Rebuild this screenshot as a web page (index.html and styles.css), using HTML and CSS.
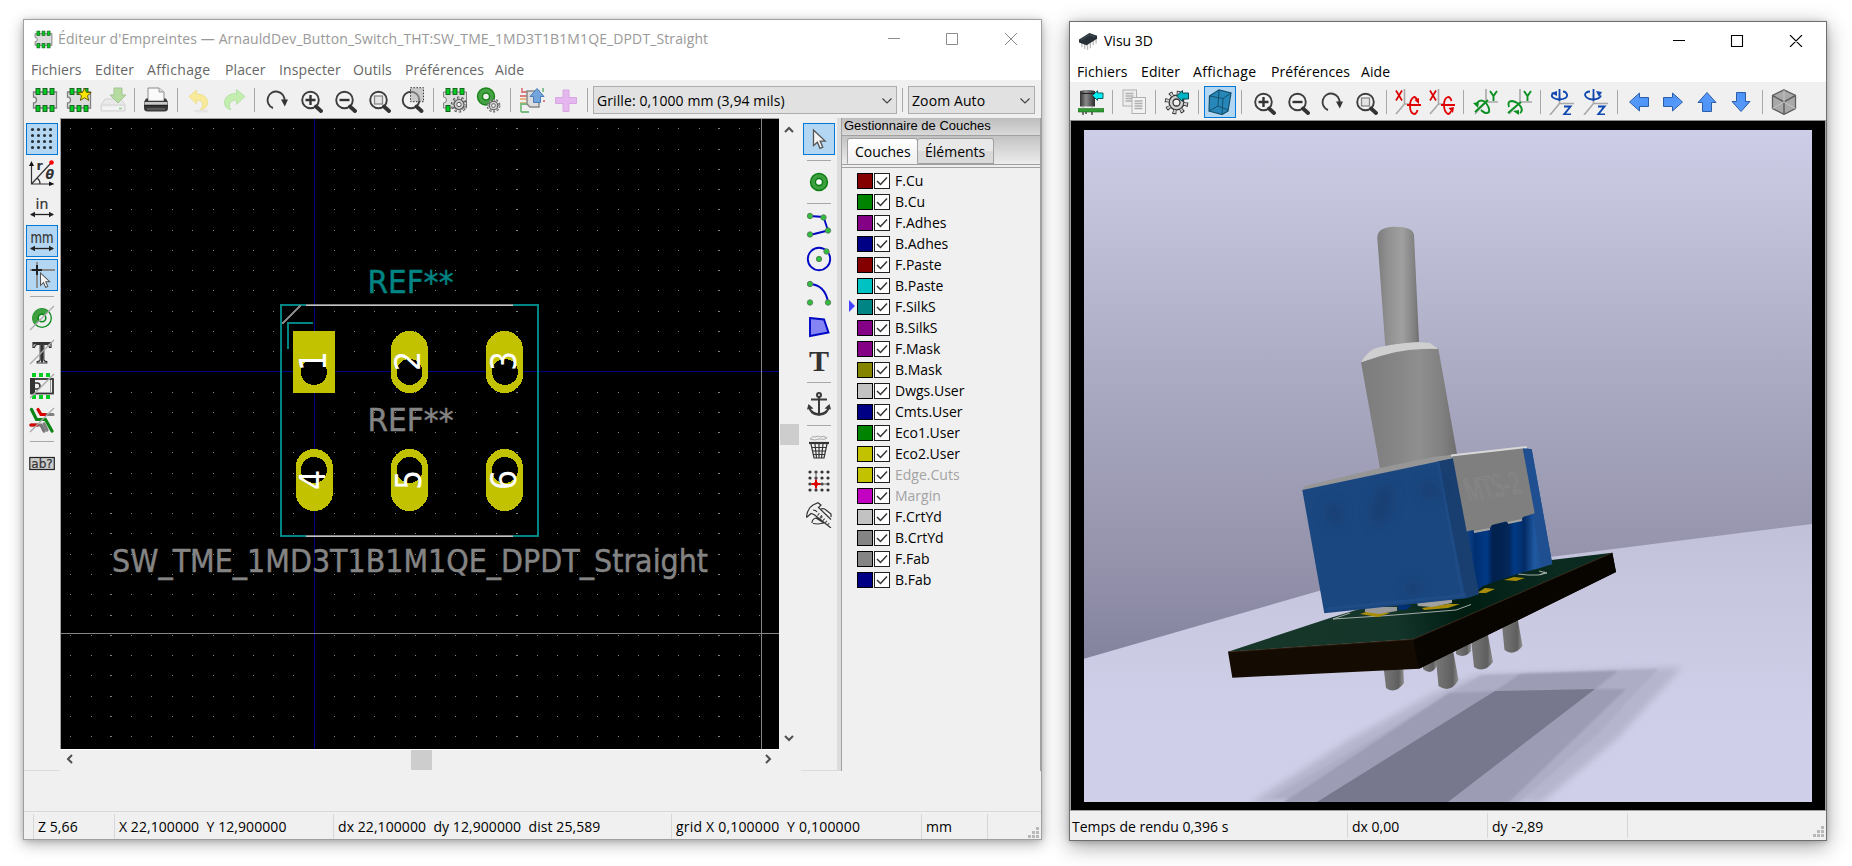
FILE: index.html
```html
<!DOCTYPE html>
<html lang="fr">
<head>
<meta charset="utf-8">
<title>Éditeur d'Empreintes</title>
<link rel="stylesheet" href="styles.css">
</head>
<body>
<svg class="sprite" aria-hidden="true">
  <defs>
    <linearGradient id="gBlueArrow" x1="0" y1="0" x2="1" y2="1"><stop offset="0" stop-color="#5b9dfb"/><stop offset="1" stop-color="#4a90f6"/></linearGradient>
    <linearGradient id="gCap" x1="0" x2="1"><stop offset="0" stop-color="#333"/><stop offset=".4" stop-color="#8a8a8a"/><stop offset="1" stop-color="#2c2c2c"/></linearGradient>
    <g id="padsTop" fill="#0c2" stroke="#175c1c" stroke-width=".9"><rect x="4" y="1.500" width="4" height="6"/><rect x="11" y="1.500" width="4" height="6"/><rect x="18" y="1.500" width="4" height="6"/></g>
    <g id="padsBot" fill="#0c2" stroke="#175c1c" stroke-width=".9"><rect x="4" y="18.500" width="4" height="6"/><rect x="11" y="18.500" width="4" height="6"/><rect x="18" y="18.500" width="4" height="6"/></g>
    <g id="glass"><circle cx="13.500" cy="13" r="8.300" fill="#f5f5f5" fill-opacity=".6" stroke="#3d3d3d" stroke-width="1.900"/><path d="M19 19.500l5 4.500" stroke="#333" stroke-width="3.800" stroke-linecap="round"/></g>
    <symbol id="fp" viewBox="0 0 26 26"><path d="M1.500 5H24.500V21H1.500V16A3 3 0 0 0 1.500 10Z" fill="#dcdcdc" stroke="#808080" stroke-width="1.300"/><use href="#padsTop"/><use href="#padsBot"/></symbol>
    <symbol id="fpstar" viewBox="0 0 26 26"><use href="#fp" width="26" height="26"/><path d="M18.500 1l1.900 4.300 4.800.4-3.700 3 1.200 4.700-4.200-2.600-4.200 2.600 1.200-4.700-3.700-3 4.800-.4Z" fill="#fbe400" stroke="#5a5200" stroke-width=".9"/></symbol>
    <symbol id="save" viewBox="0 0 26 26"><g opacity=".5"><path d="M5 12H21L25 18V24H1V18Z" fill="#e4e4e4" stroke="#b4b4b4"/><path d="M1 18H25" stroke="#bbb"/><rect x="2.500" y="19.500" width="21" height="3.500" fill="#f6f6f6"/><path d="M19 21.500h3" stroke="#3a3" stroke-width="1.500"/><path d="M14 1h8v7h4l-8 8-8-8h4Z" fill="#7ec850" stroke="#5a9a3a"/></g></symbol>
    <symbol id="print" viewBox="0 0 26 26"><path d="M5 1H16L21 5V14H5Z" fill="#fafafa" stroke="#8a8a8a"/><path d="M16 1v4h5" fill="#ddd" stroke="#999"/><path d="M3 11.500H5V14H21V11.500H23L25 15V21Q25 24.500 21.500 24.500H4.500Q1 24.500 1 21V15Z" fill="#3a3a3a"/><path d="M1.500 15h23v3h-23z" fill="#c9c9c9"/><path d="M1.500 18.500h23" stroke="#222" stroke-width="1.500"/><path d="M4 22h18" stroke="#777"/></symbol>
    <symbol id="undo" viewBox="0 0 26 26"><ellipse cx="15" cy="24" rx="8" ry="1.600" fill="#e4e4e4"/><path d="M3 9.500L10.500 3V7C18 7 22 11 21.500 16.500 21 20 18 22.500 14.500 22.500 18 19 17.500 13 10.500 13V17Z" fill="#f8ea98" stroke="#eadb86" stroke-width=".8"/></symbol>
    <symbol id="redo" viewBox="0 0 26 26"><path d="M25 9.500L16.500 2.500V6.500C8 6.500 4 11 4.500 16.500 5 20 8 22.500 11 22.500 8 19 9 13 16.500 13V17.500Z" fill="#c3eeb0" stroke="#aedd9c" stroke-width=".8"/></symbol>
    <symbol id="refresh" viewBox="0 0 26 26"><path d="M10 21A8.500 8.500 0 1 1 21.500 14" fill="none" stroke="#3d3d3d" stroke-width="1.900"/><path d="M18 12.500l7 0-3.200 7Z" fill="#333"/></symbol>
    <symbol id="zin" viewBox="0 0 26 26"><use href="#glass"/><path d="M8.500 13h10M13.500 8v10" stroke="#333" stroke-width="2.400"/></symbol>
    <symbol id="zout" viewBox="0 0 26 26"><use href="#glass"/><path d="M8.500 13h10" stroke="#333" stroke-width="2.400"/></symbol>
    <symbol id="zfit" viewBox="0 0 26 26"><use href="#glass"/><rect x="9.500" y="9" width="8" height="8" fill="#e4e4e4" stroke="#888" stroke-width="1.300"/></symbol>
    <symbol id="zsel" viewBox="0 0 26 26"><use href="#glass" x="-1.500"/><rect x="11.500" y=".7" width="13" height="14" fill="#aaa" fill-opacity=".55" stroke="#333" stroke-dasharray="1.500 1.500"/></symbol>
    <g id="gear"><circle r="6.600" fill="none" stroke="#555" stroke-width="3" stroke-dasharray="2.200 1.950"/><circle r="5" fill="#cfcfcf" stroke="#555" stroke-width="1.200"/><circle r="6.300" fill="none" stroke="#ccc" stroke-width="1.800" stroke-dasharray="1.300 2.660" stroke-dashoffset="-.4"/><circle r="2.200" fill="#f2f2f2" stroke="#555"/></g>
    <symbol id="fpgear" viewBox="0 0 26 26"><path d="M1.500 5H24.500V21H1.500V16A3 3 0 0 0 1.500 10Z" fill="#dcdcdc" stroke="#808080"/><use href="#padsTop"/><rect x="4" y="18.500" width="4" height="6" fill="#0c2" stroke="#175c1c"/><use href="#gear" x="17" y="17.500"/></symbol>
    <symbol id="padgear" viewBox="0 0 26 26"><circle cx="10" cy="9.500" r="6" fill="none" stroke="#1a841a" stroke-width="6.400"/><circle cx="10" cy="9.500" r="6" fill="none" stroke="#45a345" stroke-width="3.500"/><g transform="translate(17.500 18.500) scale(.85)"><use href="#gear"/></g></symbol>
    <symbol id="load" viewBox="0 0 26 26"><g opacity=".6" fill="none" stroke-width="1.800"><path d="M3 1v4h5M1 9h7M24 14h2" stroke="#c33"/><path d="M1 12h6M1 16h6" stroke="#e89040"/><path d="M24 1v4M2 25v-8h7M2 25h8" stroke="#2a9a3a"/></g><path d="M8 4H20V20H11L8 17Z" fill="#ddd" stroke="#888" stroke-width="1.500"/><path d="M18 1.500l7 8h-3.500v6h-7v-6h-3.500Z" fill="#72a5dc" stroke="#4c7cb8"/></symbol>
    <symbol id="plus" viewBox="0 0 26 26"><path d="M10 3h6v7.500h7.500v6H16v8h-6v-8H2.500v-6H10Z" fill="#e4b8ee" stroke="#d8a6e4"/></symbol>
    <symbol id="grid" viewBox="0 0 26 26"><path d="M3.500 3.500h22M3.500 9.500h22M3.500 15.500h22M3.500 21.500h22" stroke="#2c3338" stroke-width="3.200" stroke-linecap="round" stroke-dasharray="0 6"/></symbol>
    <symbol id="polar" viewBox="0 0 26 26"><path d="M2.500 24.500V3M2 24H23M2.500 24L22 3M8 18a7 7 0 0 1 3 6" fill="none" stroke="#333" stroke-width="1.200"/><path d="M0 6l2.500-5L5 6ZM20 21.500l5.500 2.500-5.500 2Z" fill="#111"/><circle cx="22.500" cy="2.500" r="2.300" fill="#f00"/><text x="7.500" y="10" class="ic-bold" font-size="12.500">r</text><text x="16.500" y="19" class="ic-bold" font-size="12.500" font-style="italic">θ</text></symbol>
    <g id="dblarrow"><path d="M2 20.500H24" stroke="#222" stroke-width="1.300"/><path d="M1 20.500l5-2.700v5.400ZM25 20.500l-5-2.700v5.400Z" fill="#222"/></g>
    <symbol id="inch" viewBox="0 0 26 26"><text x="13" y="15" text-anchor="middle" class="ic-sans" font-size="14">in</text><use href="#dblarrow"/></symbol>
    <symbol id="mm" viewBox="0 0 26 26"><text x="13" y="15" text-anchor="middle" class="ic-sans" font-size="15" textLength="23" lengthAdjust="spacingAndGlyphs">mm</text><use href="#dblarrow"/></symbol>
    <path id="ptr" d="M0 0V14.500L3.600 11.300 6 17 8.600 15.900 6.200 10.300H10.800Z" fill="#f4f4f4" stroke="#555" stroke-width="1.200"/>
    <symbol id="snap" viewBox="0 0 26 26"><path d="M8 0v26M1 8h25" stroke="#888" stroke-width="1.800"/><path d="M8 3v10M3 8h10" stroke="#222" stroke-width="2"/><use href="#ptr" transform="translate(11.500 11) scale(.85)"/></symbol>
    <symbol id="cursor" viewBox="0 0 26 26"><use href="#ptr" transform="translate(7.500 4) scale(1.080)"/></symbol>
    <symbol id="padoff" viewBox="0 0 26 26"><circle cx="13" cy="13" r="9.300" fill="#efefef" stroke="#0a8a1a" stroke-width="1.300"/><path d="M6.200 19.800A9.300 9.300 0 0 1 19.600 6.400Z" fill="#3d9f40"/><circle cx="13" cy="13" r="3.800" fill="#efefef" stroke="#0a8a1a" stroke-width="1.600"/><path d="M1 25L25 1" stroke="#aaa" stroke-width="1.300"/></symbol>
    <symbol id="txtoff" viewBox="0 0 26 26"><path d="M4 3.500h18v5h-1.500q-.5-3-3-3h-2.700v15q0 2 3 2.200v1.300H8.200v-1.300q3-.2 3-2.200v-15H8.500q-2.500 0-3 3H4Z" fill="#f4f4f4" stroke="#333" stroke-width="1.200"/><path d="M4 3.500h18v2H14v18h-2V5.500H4Z" fill="#333"/><path d="M1 25L25 1" stroke="#aaa" stroke-width="1.300"/></symbol>
    <symbol id="modoff" viewBox="0 0 26 26"><path d="M3 2h20M3 24h20" stroke="#0c2" stroke-width="4" stroke-dasharray="4 3"/><rect x="2" y="6" width="22" height="14.500" fill="#efefef" stroke="#333" stroke-width="1.800"/><path d="M1 5h5v16H1z" fill="#333"/><path d="M5 10h3a2.500 2.500 0 0 1 0 6H5" fill="none" stroke="#333" stroke-width="1.600"/><path d="M21.500 7v12.500" stroke="#999"/><path d="M1 25L25 1" stroke="#aaa" stroke-width="1.300"/></symbol>
    <symbol id="trkoff" viewBox="0 0 26 26"><g fill="none" stroke-width="3.200" stroke-linecap="round"><path d="M2 18h10l3 6" stroke="#777"/><path d="M14 7.500h10M15 17l3 6" stroke="#808080"/><path d="M2.500 2.500l5 10h9L23 24" stroke="#0c8418"/><path d="M9 2.500l3 5h4M2 18h6" stroke="#d80000"/></g><path d="M1 25L25 1" stroke="#aaa" stroke-width="1.300"/></symbol>
    <symbol id="abq" viewBox="0 0 26 26"><rect x=".8" y="7.500" width="24.500" height="12" fill="#ccc" stroke="#222" stroke-width="1.200"/><text x="13" y="17.800" text-anchor="middle" class="ic-sans" font-size="12" textLength="21.500" lengthAdjust="spacingAndGlyphs">ab?</text></symbol>
    <symbol id="pad" viewBox="0 0 26 26"><circle cx="13" cy="13" r="6" fill="#fff" stroke="#0a7d10" stroke-width="6.400"/><circle cx="13" cy="13" r="6" fill="none" stroke="#3d9f40" stroke-width="3.600"/></symbol>
    <g id="dot"><circle r="2.700" fill="#2fbf3f" stroke="#5a7a5a" stroke-width=".9"/></g>
    <symbol id="poly" viewBox="0 0 26 26"><path d="M4 4l13.500 1L22 18.500 4 23" fill="none" stroke="#0008c4" stroke-width="1.900"/><use href="#dot" x="4" y="4"/><use href="#dot" x="17.500" y="5.500"/><use href="#dot" x="22" y="18.500"/><use href="#dot" x="4" y="22.500"/></symbol>
    <symbol id="circ" viewBox="0 0 26 26"><circle cx="13" cy="13" r="11.200" fill="none" stroke="#0008c4" stroke-width="1.900"/><use href="#dot" x="13" y="13"/><use href="#dot" x="20.500" y="5.500"/></symbol>
    <symbol id="arc" viewBox="0 0 26 26"><path d="M4 4Q19 5 22 22" fill="none" stroke="#0008c4" stroke-width="1.900"/><use href="#dot" x="4" y="4"/><use href="#dot" x="4" y="22.500"/><use href="#dot" x="22" y="22.500"/></symbol>
    <symbol id="zone" viewBox="0 0 26 26"><path d="M4 4L18 5.500 22.500 18.500 4 22Z" fill="#8484f4" stroke="#0008c4" stroke-width="1.900"/></symbol>
    <symbol id="txt" viewBox="0 0 26 26"><text x="13" y="23" text-anchor="middle" class="ic-serif" font-size="30" fill="#333">T</text></symbol>
    <symbol id="anchor" viewBox="0 0 26 26"><g fill="none" stroke="#3a3a3a" stroke-width="2"><circle cx="13" cy="4" r="2"/><path d="M13 6v17M5 8.500h16M3 16q2 7 10 7.500 8-.5 10-7.500" /></g><path d="M1 18.500l1.500-5.500 5 4.500ZM25 18.500l-1.500-5.500-5 4.500Z" fill="#3a3a3a"/><path d="M4 17q3 5 9 5t9-5l-1 5q-3 2.500-8 2.700-5-.2-8-2.700Z" fill="#3a3a3a"/></symbol>
    <symbol id="trash" viewBox="0 0 26 26"><path d="M4 5q3-4 5-2 3-2 5 0 4-2 7 1-2 2-8 1-4 2-9 0" fill="#eee" stroke="#aaa"/><path d="M3 9H23" stroke="#333" stroke-width="2.200"/><path d="M5 10l3 14h10l3-14M9 10l1.500 14M13 10v14M17 10l-1.500 14M5.500 13.500h15M6 17h14M7 20.500h12" fill="none" stroke="#333" stroke-width="1.200"/></symbol>
    <symbol id="origin" viewBox="0 0 26 26"><path d="M4 4h20M4 10h20M4 16h20M4 22h20" stroke="#333" stroke-width="3.200" stroke-linecap="round" stroke-dasharray="0 6"/><path d="M10 3v19M4 16h18" stroke="#666"/><path d="M10 11.500v9M5.500 16h9" stroke="#e00000" stroke-width="2"/><circle cx="10" cy="16" r="2.200" fill="#e00000"/></symbol>
    <symbol id="caliper" viewBox="0 0 26 26"><path d="M.5 15.500Q1 7 7 3L12 .8l3 2.200-2.500 2.500L25 17.500M.5 15.500L5 11.500l3 1M8 12.500L25 26M7 8q3 0 4 2M6 21q0-4 4-5l8 5-6 1-5-.5M15 7q3-1 5 1l5 4v3" fill="none" stroke="#333" stroke-width="1.200"/><path d="M12 12l5 4M15 15l8 8" stroke="#555" stroke-dasharray="1.200 2" stroke-width="3"/></symbol>

    <symbol id="cap3d" viewBox="0 0 26 26"><path d="M2 2Q9.500 0 17 2V17.500H2Z" fill="url(#gCap)"/><path d="M3 4.500h13" stroke="#222"/><path d="M0 19.500H26V23H0Z" fill="#2f9a32" stroke="#1c6c20" stroke-width=".6"/><path d="M5 17.500v2M14 17.500v2" stroke="#999"/><path d="M5 23v3M8 23v2M14 23v3" stroke="#333" stroke-width="1.300"/><path d="M14.500 6.500L19.500 1.800V4H25V9.500H19.500V11.500Z" fill="#00f0f4" stroke="#145a60"/></symbol>
    <symbol id="copy" viewBox="0 0 26 26"><g stroke="#b0b0b0"><rect x="2" y="1" width="13.500" height="16" fill="#ededed"/><path d="M4.500 4.500h8M4.500 7h8M4.500 9.500h8M4.500 12h8" stroke-width="1.600"/><rect x="11" y="8.500" width="13.500" height="16" fill="#f2f2f2"/><path d="M13.500 12h8M13.500 14.500h8M13.500 17h8M13.500 19.500h8" stroke-width="1.600"/></g></symbol>
    <symbol id="gearback" viewBox="0 0 26 26"><g transform="translate(12.500 13.500)"><circle r="9.500" fill="none" stroke="#222" stroke-width="4.600" stroke-dasharray="3.600 3.860"/><circle r="7.400" fill="#d0d0d0" stroke="#333" stroke-width="1.300"/><circle r="9.300" fill="none" stroke="#d0d0d0" stroke-width="3.400" stroke-dasharray="2.200 5.100" stroke-dashoffset="-.7"/><circle r="3.500" fill="#f0f0f0" stroke="#333" stroke-width="1.300"/></g><path d="M12.500 7L18.500 1.500V4H24.500V10H18.500V12.500Z" fill="#00b4c4" stroke="#0e4a52"/></symbol>
    <symbol id="cubeblue" viewBox="0 0 26 26"><path d="M2.500 7L12 .8 24 4 21 22 15 25.500 2 22Z" fill="#2787b8" stroke="#14506e" stroke-width="1.200"/><path d="M2.500 7L16 9.500 24 4M16 9.500L15 25.500M12 1l-1 16L2 22M11 17l10 4" fill="none" stroke="#14506e" stroke-width="1"/></symbol>
    <g id="axes"><path d="M9.500 0v15H14M9.500 15L1 25" fill="none" stroke="#a8a8a8" stroke-width="1.600"/><path d="M1 1.500l6 10M7 1.500L1 11.500" stroke="#d80000" stroke-width="1.700"/></g>
    <symbol id="rx" viewBox="0 0 26 26"><use href="#axes"/><path d="M12 16h14M22.500 21q-1 4-3.500 4-4-1-4-8t4-9q2 0 3 3" fill="none" stroke="#e00000" stroke-width="1.800"/><path d="M19.500 11l4.500-2 0 6Z" fill="#e00000"/></symbol>
    <symbol id="rx2" viewBox="0 0 26 26"><use href="#axes"/><path d="M12 16h14M22.500 12q-1-4-3.500-4-4 1-4 8t4 9q2 0 3-3" fill="none" stroke="#e00000" stroke-width="1.800"/><path d="M19.500 19l5.500-1-1 6Z" fill="#e00000"/></symbol>
    <g id="yaxes"><path d="M14 0v13H26M14 13L3 25" fill="none" stroke="#a8a8a8" stroke-width="1.600"/><path d="M18 2l3.500 5L25 2M21.500 7v5" fill="none" stroke="#0a9020" stroke-width="1.900"/></g>
    <symbol id="ry" viewBox="0 0 26 26"><use href="#yaxes"/><path d="M5 14q4-5 9 0 4 5 3 9-3 3-8-2M3 23L16 11" fill="none" stroke="#0a9020" stroke-width="1.900"/><path d="M1 14l6-1-1 6Z" fill="#0a9020"/></symbol>
    <symbol id="ry2" viewBox="0 0 26 26"><use href="#yaxes"/><path d="M3 18q-2-6 3-6 6 1 9 6 2 4-1 6M2 24L15 13" fill="none" stroke="#0a9020" stroke-width="1.900"/><path d="M7 22l6-1 0 5Z" fill="#0a9020"/></symbol>
    <g id="zaxes"><path d="M10.500 5v9.500H25M10.500 14.500L1 26" fill="none" stroke="#a8a8a8" stroke-width="1.600"/><path d="M15 17.500h6.500L15 25.500h7" fill="none" stroke="#1048b0" stroke-width="1.900"/></g>
    <symbol id="rz" viewBox="0 0 26 26"><use href="#zaxes"/><path d="M10.500 0v12M4 4q-4 5 6 6.500 9-.5 8-5-1-3-4-3" fill="none" stroke="#1048b0" stroke-width="1.800"/><path d="M2 4l6-2v5Z" fill="#1048b0"/></symbol>
    <symbol id="rz2" viewBox="0 0 26 26"><use href="#zaxes"/><path d="M10.500 0v12M7 2.500q-5 0-5 3.500 1 4 8 4.500 7-.5 8-4" fill="none" stroke="#1048b0" stroke-width="1.800"/><path d="M13 2l6 1-3 5Z" fill="#1048b0"/></symbol>
    <symbol id="arr" viewBox="0 0 26 26"><path d="M3.500 13L13.500 4V8.500H22.500V17.500H13.500V22Z" fill="url(#gBlueArrow)" stroke="#2c5ea8"/></symbol>
    <symbol id="cubegrey" viewBox="0 0 26 26"><path d="M13 .8L24.500 6.500V19.500L13 25.400 1.500 19.500V6.500Z" fill="#a9a9a9" stroke="#5f5f5f" stroke-width="1.300"/><path d="M1.500 6.500L13 13 24.500 6.500M13 13v12" fill="none" stroke="#5f5f5f" stroke-width="1.500"/><path d="M13 1v12M1.500 19.500L13 13l11.500 6.500" fill="none" stroke="#c4c4c4"/></symbol>
    <symbol id="chk" viewBox="0 0 16 16"><rect x=".5" y=".5" width="15" height="15" fill="#fff" stroke="#222"/><path d="M3 8l3.500 3.500L13 4.500" fill="none" stroke="#333" stroke-width="1.500"/></symbol>
    <symbol id="up" viewBox="0 0 10 10"><path d="M1 7l4-4 4 4" fill="none" stroke="#505050" stroke-width="2"/></symbol>
  </defs>
</svg>

<main class="desktop">
<section class="window editor">
  <header class="titlebar">
    <svg class="app-icon"><use href="#fp"/></svg>
    <h1 class="title">Éditeur d'Empreintes — ArnauldDev_Button_Switch_THT:SW_TME_1MD3T1B1M1QE_DPDT_Straight</h1>
    <svg class="sysbtns" viewBox="0 0 130 12"><path d="M0 5.500h12M58.500.5h11v11h-11zM117 0l12 12M129 0l-12 12" fill="none" stroke="currentColor"/></svg>
  </header>
  <nav class="menubar"><span>Fichiers</span><span>Editer</span><span>Affichage</span><span>Placer</span><span>Inspecter</span><span>Outils</span><span>Préférences</span><span>Aide</span></nav>
  <div class="toolbar">
    <b class="btn"><svg><use href="#fp"/></svg></b><b class="btn"><svg><use href="#fpstar"/></svg></b><b class="btn"><svg><use href="#save"/></svg></b><i class="sep"></i>
    <b class="btn"><svg><use href="#print"/></svg></b><i class="sep"></i>
    <b class="btn"><svg><use href="#undo"/></svg></b><b class="btn"><svg><use href="#redo"/></svg></b><i class="sep"></i>
    <b class="btn"><svg><use href="#refresh"/></svg></b><b class="btn"><svg><use href="#zin"/></svg></b><b class="btn"><svg><use href="#zout"/></svg></b><b class="btn"><svg><use href="#zfit"/></svg></b><b class="btn"><svg><use href="#zsel"/></svg></b><i class="sep"></i>
    <b class="btn"><svg><use href="#fpgear"/></svg></b><b class="btn"><svg><use href="#padgear"/></svg></b><i class="sep"></i>
    <b class="btn"><svg><use href="#load"/></svg></b><b class="btn"><svg><use href="#plus"/></svg></b><i class="sep"></i>
    <div class="combo combo-grid"><span>Grille: 0,1000 mm (3,94 mils)</span><svg viewBox="0 0 10 6"><path d="M.5.5l4.500 4.500 4.500-4.500" fill="none" stroke="#444" stroke-width="1.200"/></svg></div><i class="sep"></i>
    <div class="combo combo-zoom"><span>Zoom Auto</span><svg viewBox="0 0 10 6"><path d="M.5.5l4.500 4.500 4.500-4.500" fill="none" stroke="#444" stroke-width="1.200"/></svg></div>
  </div>
  <div class="workspace">
    <aside class="vtools">
      <b class="btn on"><svg><use href="#grid"/></svg></b><b class="btn"><svg><use href="#polar"/></svg></b><b class="btn"><svg><use href="#inch"/></svg></b><b class="btn on"><svg><use href="#mm"/></svg></b><b class="btn on"><svg><use href="#snap"/></svg></b><i class="hsep"></i>
      <b class="btn"><svg><use href="#padoff"/></svg></b><b class="btn"><svg><use href="#txtoff"/></svg></b><b class="btn"><svg><use href="#modoff"/></svg></b><b class="btn"><svg><use href="#trkoff"/></svg></b><i class="hsep"></i>
      <b class="btn"><svg><use href="#abq"/></svg></b>
    </aside>
    <div class="viewport">
      <svg class="canvas" viewBox="61 119 718 630">
        <path class="dots" d="M70 128.500H779M70 149.500H779M70 169.500H779M70 189.500H779M70 209.500H779M70 230.500H779M70 250.500H779M70 270.500H779M70 290.500H779M70 311.500H779M70 331.500H779M70 351.500H779M70 392.500H779M70 412.500H779M70 432.500H779M70 452.500H779M70 473.500H779M70 493.500H779M70 513.500H779M70 533.500H779M70 554.500H779M70 574.500H779M70 594.500H779M70 615.500H779M70 635.500H779M70 655.500H779M70 675.500H779M70 696.500H779M70 716.500H779M70 736.500H779"/>
        <path d="M314.500 119V749M61 371.500H779" stroke="#000084"/>
        <rect x="281" y="305" width="257" height="231" fill="none" stroke="#008484" stroke-width="2"/>
        <path d="M306 304.500H513M306 535.500H513" stroke="#848484"/><path d="M306 305.500H513M306 536.500H513" stroke="#c2c2c2"/>
        <path d="M282 324L300.500 305.500" stroke="#848484" stroke-width="2"/>
        <path d="M313 322.500H288V349" fill="none" stroke="#008484" stroke-width="2"/>
        <g fill="#c2c200"><path d="M293 331h42v62h-42z"/><rect x="391" y="331" width="37" height="62" rx="18.500"/><rect x="486" y="331" width="37" height="62" rx="18.500"/><rect x="295.500" y="449" width="37.500" height="62" rx="18.700"/><rect x="391" y="449" width="37" height="62" rx="18.500"/><rect x="486" y="449" width="37" height="62" rx="18.500"/></g>
        <g><circle cx="314" cy="372" r="13"/><circle cx="409.500" cy="372" r="13"/><circle cx="505" cy="372" r="13"/><circle cx="314" cy="470" r="13"/><circle cx="409.500" cy="470" r="13"/><circle cx="505" cy="470" r="13"/></g>
        <g class="padnum"><text transform="translate(326 361) rotate(-90) scale(.85 1.040)">1</text><text transform="translate(420 361) rotate(-90) scale(.9 1)">2</text><text transform="translate(515.500 361) rotate(-90) scale(.88 1)">3</text><text transform="translate(325 480) rotate(-90) scale(.88 1)">4</text><text transform="translate(420.500 480) rotate(-90) scale(.88 1)">5</text><text transform="translate(516 480) rotate(-90) scale(.88 1)">6</text></g>
        <text class="stroke-text" x="367.500" y="293" textLength="86" lengthAdjust="spacingAndGlyphs" fill="#008484" stroke="#008484">REF**</text>
        <text class="stroke-text" x="367.500" y="431" textLength="86" lengthAdjust="spacingAndGlyphs" fill="#848484" stroke="#848484">REF**</text>
        <text class="stroke-text" x="112" y="572" textLength="596" lengthAdjust="spacingAndGlyphs" fill="#848484" stroke="#848484">SW_TME_1MD3T1B1M1QE_DPDT_Straight</text>
        <path d="M761.500 119V749M61 633.500H779" stroke="#848484"/>
      </svg>
      <div class="vscroll"><svg><use href="#up"/></svg><i class="thumb"></i><svg class="down"><use href="#up"/></svg></div>
      <div class="hscroll"><svg class="left"><use href="#up"/></svg><i class="thumb"></i><svg class="right"><use href="#up"/></svg></div>
    </div>
    <aside class="vtools">
      <b class="btn on"><svg><use href="#cursor"/></svg></b><i class="hsep"></i>
      <b class="btn"><svg><use href="#pad"/></svg></b><i class="hsep"></i>
      <b class="btn"><svg><use href="#poly"/></svg></b><b class="btn"><svg><use href="#circ"/></svg></b><b class="btn"><svg><use href="#arc"/></svg></b><b class="btn"><svg><use href="#zone"/></svg></b><b class="btn"><svg><use href="#txt"/></svg></b><i class="hsep"></i>
      <b class="btn"><svg><use href="#anchor"/></svg></b><i class="hsep"></i>
      <b class="btn"><svg><use href="#trash"/></svg></b><b class="btn"><svg><use href="#origin"/></svg></b><b class="btn"><svg><use href="#caliper"/></svg></b>
    </aside>
    <i class="sash"></i>
    <aside class="layers">
      <h2 class="layers-head">Gestionnaire de Couches</h2>
      <div class="tabs"><span class="tab active">Couches</span><span class="tab">Éléments</span></div>
      <ul class="layer-list">
        <li><i class="sw red"></i><svg><use href="#chk"/></svg>F.Cu</li>
        <li><i class="sw green"></i><svg><use href="#chk"/></svg>B.Cu</li>
        <li><i class="sw purple"></i><svg><use href="#chk"/></svg>F.Adhes</li>
        <li><i class="sw navy"></i><svg><use href="#chk"/></svg>B.Adhes</li>
        <li><i class="sw red"></i><svg><use href="#chk"/></svg>F.Paste</li>
        <li><i class="sw cyan"></i><svg><use href="#chk"/></svg>B.Paste</li>
        <li class="current"><i class="sw teal"></i><svg><use href="#chk"/></svg>F.SilkS</li>
        <li><i class="sw purple"></i><svg><use href="#chk"/></svg>B.SilkS</li>
        <li><i class="sw purple"></i><svg><use href="#chk"/></svg>F.Mask</li>
        <li><i class="sw olive"></i><svg><use href="#chk"/></svg>B.Mask</li>
        <li><i class="sw silver"></i><svg><use href="#chk"/></svg>Dwgs.User</li>
        <li><i class="sw navy"></i><svg><use href="#chk"/></svg>Cmts.User</li>
        <li><i class="sw green"></i><svg><use href="#chk"/></svg>Eco1.User</li>
        <li><i class="sw yellow"></i><svg><use href="#chk"/></svg>Eco2.User</li>
        <li class="off"><i class="sw yellow"></i><svg><use href="#chk"/></svg>Edge.Cuts</li>
        <li class="off"><i class="sw magenta"></i><svg><use href="#chk"/></svg>Margin</li>
        <li><i class="sw silver"></i><svg><use href="#chk"/></svg>F.CrtYd</li>
        <li><i class="sw grey"></i><svg><use href="#chk"/></svg>B.CrtYd</li>
        <li><i class="sw grey"></i><svg><use href="#chk"/></svg>F.Fab</li>
        <li><i class="sw navy"></i><svg><use href="#chk"/></svg>B.Fab</li>
      </ul>
    </aside>
  </div>
  <footer class="status"><span></span><span>Z 5,66</span><span>X 22,100000&nbsp; Y 12,900000</span><span>dx 22,100000&nbsp; dy 12,900000&nbsp; dist 25,589</span><span>grid X 0,100000&nbsp; Y 0,100000</span><span>mm</span><span class="last"><svg class="grip" viewBox="0 0 11 11"><path d="M8 0h3v3H8zM4 4h3v3H4zM8 4h3v3H8zM0 8h3v3H0zM4 8h3v3H4zM8 8h3v3H8z" fill="#b8b8b8"/></svg></span></footer>
</section>

<section class="window viewer">
  <header class="titlebar">
    <svg class="app-icon" viewBox="0 0 20 20"><path d="M3 10v6M6 12v6M9 12v7M12 10v7M15 7v7M18 6v6" stroke="#bbb" stroke-width="1.400"/><path d="M0 8L11 1l8 3v3L8 14 0 11Z" fill="#263036"/><path d="M2 8.500L11 3l6 2" fill="none" stroke="#4a565c"/></svg>
    <h1 class="title">Visu 3D</h1>
    <svg class="sysbtns" viewBox="0 0 130 12"><path d="M0 5.500h12M58.500.5h11v11h-11zM117 0l12 12M129 0l-12 12" fill="none" stroke="currentColor" stroke-width="1.100"/></svg>
  </header>
  <nav class="menubar"><span>Fichiers</span><span>Editer</span><span>Affichage</span><span>Préférences</span><span>Aide</span></nav>
  <div class="toolbar">
    <b class="btn"><svg><use href="#cap3d"/></svg></b><i class="sep"></i><b class="btn"><svg><use href="#copy"/></svg></b><i class="sep"></i><b class="btn"><svg><use href="#gearback"/></svg></b><i class="sep"></i><b class="btn on"><svg><use href="#cubeblue"/></svg></b><i class="sep"></i>
    <b class="btn"><svg><use href="#zin"/></svg></b><b class="btn"><svg><use href="#zout"/></svg></b><b class="btn"><svg><use href="#refresh"/></svg></b><b class="btn"><svg><use href="#zfit"/></svg></b><i class="sep"></i>
    <b class="btn"><svg><use href="#rx"/></svg></b><b class="btn"><svg><use href="#rx2"/></svg></b><i class="sep"></i>
    <b class="btn"><svg><use href="#ry"/></svg></b><b class="btn"><svg><use href="#ry2"/></svg></b><i class="sep"></i>
    <b class="btn"><svg><use href="#rz"/></svg></b><b class="btn"><svg><use href="#rz2"/></svg></b><i class="sep"></i>
    <b class="btn"><svg><use href="#arr"/></svg></b><b class="btn"><svg class="a-right"><use href="#arr"/></svg></b><b class="btn"><svg class="a-up"><use href="#arr"/></svg></b><b class="btn"><svg class="a-down"><use href="#arr"/></svg></b><i class="sep"></i>
    <b class="btn"><svg><use href="#cubegrey"/></svg></b>
  </div>
  <div class="stage">
    <svg viewBox="1084 130 728 672">
      <defs>
        <linearGradient id="sky" x1="0" x2="0" y1="130" y2="660" gradientUnits="userSpaceOnUse"><stop offset="0" stop-color="#cdcde8"/><stop offset=".13" stop-color="#c4c4dc"/><stop offset=".5" stop-color="#a9a8c1"/><stop offset=".8" stop-color="#9694ad"/><stop offset="1" stop-color="#84839e"/></linearGradient>
        <linearGradient id="floor" x1="0" x2="0" y1="524" y2="720" gradientUnits="userSpaceOnUse"><stop offset="0" stop-color="#c1c1da"/><stop offset=".5" stop-color="#c9c9e2"/><stop offset="1" stop-color="#cfcfe9"/></linearGradient>
        <linearGradient id="lever"><stop offset="0" stop-color="#7d7d7d"/><stop offset=".25" stop-color="#909090"/><stop offset=".6" stop-color="#a0a0a0"/><stop offset=".9" stop-color="#808080"/><stop offset="1" stop-color="#6c6c6c"/></linearGradient>
        <linearGradient id="bush"><stop offset="0" stop-color="#7c7c7c"/><stop offset=".35" stop-color="#858585"/><stop offset=".6" stop-color="#8f8f8f"/><stop offset=".85" stop-color="#808080"/><stop offset="1" stop-color="#6e6e6e"/></linearGradient>
        <linearGradient id="pin"><stop offset="0" stop-color="#787878"/><stop offset=".45" stop-color="#6a6a6a"/><stop offset=".75" stop-color="#5e5e5e"/><stop offset="1" stop-color="#929292"/></linearGradient>
        <linearGradient id="rightBlue"><stop offset="0" stop-color="#1b4d92"/><stop offset=".17" stop-color="#0c3c80"/><stop offset=".22" stop-color="#002f72"/><stop offset=".34" stop-color="#003a86"/><stop offset=".4" stop-color="#01204c"/><stop offset=".56" stop-color="#03275a"/><stop offset=".62" stop-color="#003a86"/><stop offset=".72" stop-color="#032c66"/><stop offset=".82" stop-color="#1f58a0"/><stop offset="1" stop-color="#1e4c88"/></linearGradient>
        <linearGradient id="pcb" x1="1300" y1="640" x2="1560" y2="560" gradientUnits="userSpaceOnUse"><stop offset="0" stop-color="#17362a"/><stop offset=".35" stop-color="#14352a"/><stop offset=".6" stop-color="#001d12"/><stop offset="1" stop-color="#0c2b20"/></linearGradient>
        <filter id="soft" x="-20%" y="-20%" width="140%" height="140%"><feGaussianBlur stdDeviation="3.500"/></filter>
        <filter id="soft1" x="-20%" y="-20%" width="140%" height="140%"><feGaussianBlur stdDeviation="1"/></filter>
        <filter id="blotch" x="-50%" y="-50%" width="200%" height="200%"><feGaussianBlur stdDeviation="6"/></filter>
      </defs>
      <rect x="1084" y="130" width="728" height="672" fill="url(#sky)"/>
      <path d="M1084 658.700L1349 582.300 1812 524V802H1084Z" fill="url(#floor)"/>
      <path d="M1477 675L1682 667 1618 738 1541 803H1250L1352 738 1434 693Z" fill="#b5b5cd" filter="url(#soft)"/>
      <path d="M1452 692L1482 675 1658 669 1638 690 1600 732 1518 803 1272 798Z" fill="#adadc5" filter="url(#soft1)"/>
      <path d="M1449 693L1495 691 1520 674 1618 671 1595 689H1626L1508 803H1282Z" fill="#9c9cb4" filter="url(#soft1)"/>
      <path d="M1495 691L1595 689 1448 802H1317Z" fill="#77778d"/>
      <g fill="url(#pin)"><path d="M1422 655h15v11q-6 10-14 3Z"/><path d="M1455 640h16v11q-6 8-15 3Z"/><path d="M1383 662h20l1 21q-9 12-18 5Z"/><path d="M1435 650h18l5.500 30q-8 14-20 6Z"/><path d="M1470 630h17l6 32q-9 12-19 5Z"/><path d="M1501 615h16l5.500 31q-9 11-18 4Z"/></g>
      <path d="M1228 651.700L1413.300 639 1612.300 552.700 1616 572 1419 668.700 1232.300 677.700Z" fill="#140c02"/>
      <path d="M1413.300 639L1612.300 552.700 1616 572 1419 668.700Z" fill="#080400"/>
      <path d="M1228 651.700L1330 618 1500 566 1612.300 552.700 1413.300 639Z" fill="url(#pcb)"/>
      <path d="M1228 652L1413.300 639.500 1612 553" fill="none" stroke="#3a2412" stroke-width=".8"/>
      <path d="M1350 613l-17 6 55-3.500 68-5.500 15-5.500M1518 574l10 1 10 0 9-2-8-2M1540 575l5-3" fill="none" stroke="#b4bab6" stroke-width=".9"/>
      <path d="M1360 614l12-4 18 3-12 4Z" fill="#a88c08"/><path d="M1365 607h32v4l-18 3-14-2Z" fill="#9b9b9b"/>
      <path d="M1422 608l26-4 12 0-12 4-24 2Z" fill="#a88c08"/><path d="M1417 603l35-4v4l-20 4-14-1Z" fill="#a2a2a2"/>
      <path d="M1477 593l8-5 10 1-9 4Z" fill="#a88c08"/><path d="M1504 580l10-3 11 1-9 3Z" fill="#a88c08"/>
      <path d="M1398 605l14 0-6 5-8 0Z" fill="#002f74"/>
      <path d="M1380 468.300L1361 362.300 1400 350 1438.300 348.300 1457 454Z" fill="url(#bush)"/>
      <path d="M1361 362.300Q1368 350 1378 347.500 1410 340 1430 343L1438.300 349Q1400 347 1361 362.300Z" fill="#cfcfcf"/>
      <path d="M1377.300 238Q1377 228 1392 226.700 1413 226 1414 235L1419 341.700Q1400 343 1385.300 345.700Z" fill="url(#lever)"/>
      <path d="M1302.300 490L1304.700 486 1380 468 1434 456.700 1452.300 455 1454 459Z" fill="#969696"/>
      <path d="M1453.300 458.300L1522.700 448 1531.700 449.300 1552.300 564 1540 568 1517 574 1483 586 1466.700 598.300Z" fill="url(#rightBlue)"/>
      <path d="M1522.700 448L1531.700 449.300 1552.300 564 1541 567Z" fill="#1f4f90"/>
      <path d="M1302.300 490L1453.300 458.300 1479 594 1466.700 598.300 1324.300 613.300Z" fill="#1b4780"/>
      <path d="M1438 461.500L1453.300 458.300 1479 594 1466 598.300Z" fill="#193f70"/>
      <path d="M1438 461.500L1463 598" stroke="#1f4b86" stroke-width="2.500"/>
      <g fill="#143a6c" filter="url(#blotch)" opacity=".6"><ellipse cx="1334" cy="514" rx="8" ry="12"/><ellipse cx="1382" cy="505" rx="10" ry="22" transform="rotate(15 1382 505)"/><ellipse cx="1430" cy="490" rx="10" ry="9"/><ellipse cx="1413" cy="588" rx="7" ry="10"/></g>
      <path d="M1327 609L1466 595" stroke="#22508c" stroke-width="3" opacity=".6"/>
      <path d="M1452.300 455L1522.700 448 1534.700 513.300 1523 517 1521 521 1508 523 1506 521.500 1492 525 1489 529.500 1475 532.500 1473 530 1466.700 531.500Z" fill="#7f7f7f"/>
      <path d="M1451 455.500L1522 447.500 1527 447.300" fill="none" stroke="#d8d8d8" stroke-width="2"/>
      <path d="M1474 532l16-3M1508 523l14-3" stroke="#a5a5a5" stroke-width="2"/>
      <text class="emboss" transform="translate(1468 501) rotate(-9) skewX(8)" textLength="56" lengthAdjust="spacingAndGlyphs">MTS-2</text>
    </svg>
  </div>
  <footer class="status"><span>Temps de rendu 0,396 s</span><span>dx 0,00</span><span>dy -2,89</span><span class="last"><svg class="grip" viewBox="0 0 11 11"><path d="M8 0h3v3H8zM4 4h3v3H4zM8 4h3v3H8zM0 8h3v3H0zM4 8h3v3H4zM8 8h3v3H8z" fill="#b8b8b8"/></svg></span></footer>
</section>
</main>
</body>
</html>
```
FILE: styles.css
```css
* { box-sizing: border-box; }
body {
  margin: 0;
  width: 1852px;
  height: 866px;
  overflow: hidden;
  background: #fff;
  color: #000;
  font: 14px/20px "Open Sans", "Noto Sans", sans-serif;
}
.sprite { position: absolute; width: 0; height: 0; }
.desktop { display: flex; align-items: flex-start; padding: 19px 0 0 23px; gap: 27px; }
.window {
  display: flex;
  flex-direction: column;
  flex: none;
  background: #f0f0f0;
  border: 1px solid #a0a0a0;
  box-shadow: 0 4px 14px rgba(0, 0, 0, .3), 0 1px 5px rgba(0, 0, 0, .15);
}
.editor { width: 1019px; height: 821px; }
.viewer { width: 758px; height: 820px; margin-top: 2px; border-color: #6e6e6e; box-shadow: 0 5px 20px rgba(0, 0, 0, .38), 0 1px 5px rgba(0, 0, 0, .2); }

.titlebar { display: flex; align-items: center; height: 38px; background: #fff; color: #999; }
.editor .titlebar { padding: 0 23px 0 10px; }
.viewer .titlebar { padding: 0 23px 0 9px; color: #000; }
.app-icon { width: 19px; height: 19px; flex: none; margin-right: 6px; }
.title { margin: 0; font-size: 14px; font-weight: 400; flex: 1; white-space: nowrap; }
.editor .title { letter-spacing: .11px; }
.editor .app-icon { margin-right: 5px; }
.sysbtns { width: 130px; height: 12px; flex: none; }
.editor .sysbtns { color: #8c8c8c; }

.menubar { display: flex; height: 22px; background: #fff; padding: 2px 0 0 7px; white-space: nowrap; letter-spacing: .1px; }
.menubar span { flex: none; }
.menubar span:nth-child(3) { letter-spacing: .35px; }
.editor .menubar { color: #666; }
.editor .menubar span:nth-child(1) { width: 64px; }
.editor .menubar span:nth-child(2) { width: 52px; }
.editor .menubar span:nth-child(3) { width: 78px; }
.editor .menubar span:nth-child(4) { width: 54px; }
.editor .menubar span:nth-child(5) { width: 74px; }
.editor .menubar span:nth-child(6) { width: 52px; }
.editor .menubar span:nth-child(7) { width: 90px; }
.viewer .menubar span:nth-child(1) { width: 64px; }
.viewer .menubar span:nth-child(2) { width: 52px; }
.viewer .menubar span:nth-child(3) { width: 78px; }
.viewer .menubar span:nth-child(4) { width: 90px; }

.toolbar { display: flex; gap: 2px; height: 38px; padding: 4px 0 0 5px; background: #f0f0f0; }
.btn { display: grid; place-items: center; width: 32px; height: 32px; flex: none; font-weight: 400; }
.btn svg { width: 26px; height: 26px; display: block; overflow: visible; }
.btn.on { background: #b3d7f3; border: 1px solid #0078d7; }
.sep { width: 7px; height: 24px; margin-top: 4px; flex: none; background: linear-gradient(#a8a8a8, #a8a8a8) 3px 0 / 1px 100% no-repeat; }
.hsep { width: 24px; height: 7px; flex: none; background: linear-gradient(#a8a8a8, #a8a8a8) 0 3px / 100% 1px no-repeat; }
.combo { display: flex; align-items: center; justify-content: space-between; height: 28px; margin-top: 2px; padding: 1px 4px 0 3px; background: #e1e1e1; border: 1px solid #adadad; flex: none; letter-spacing: .1px; }
.combo svg { width: 10px; height: 6px; }
.combo-grid { width: 304px; }
.combo-zoom { width: 127px; }
.a-right { transform: rotate(180deg); }
.a-up { transform: rotate(90deg); }
.a-down { transform: rotate(-90deg); }

.workspace { display: grid; grid-template-columns: 36px 741px 36px 4px 200px; height: 653px; }
.vtools { display: flex; flex-direction: column; align-items: center; gap: 2px; padding-top: 5px; border-bottom: 1px solid #dcdcdc; }
.sash { background: #dcdcdc; }
.viewport { display: grid; grid-template-columns: 719px 22px; grid-template-rows: 631px 22px; }
.canvas { width: 719px; height: 631px; display: block; background: #000; border-left: 1px solid #a0a0a0; border-top: 1px solid #a0a0a0; shape-rendering: crispEdges; }
.dots {
  fill: none;
  stroke: #848484;
  stroke-dasharray: 1 20 1 18 2 19 1 19 1 20 1 19 1 20 1 19 1 19 1 19 1 19 1 40 1 19 1 19 1 20 1 19 1 19 1 19 1 20 1 19 1 19 2 19 1 19 1 19 1 19 1 20 1 19 1 19 1 19 1 20 1 18 2 19 1 19 1 100;
}
.padnum { font: 36px "DejaVu Sans", sans-serif; fill: #fff; text-anchor: middle; }
.stroke-text { font: 32px "DejaVu Sans", sans-serif; stroke-width: .5; }
.vscroll { display: flex; flex-direction: column; align-items: flex-start; padding: 7px 0 6px 1px; }
.vscroll svg, .hscroll svg { width: 10px; height: 10px; flex: none; }
.vscroll svg { margin-left: 4px; }
.vscroll .thumb { width: 19px; height: 21px; margin: 289px 0 auto; background: #cdcdcd; }
.down { transform: rotate(180deg); }
.hscroll { display: flex; align-items: flex-start; padding: 1px 6px 0 5px; border-top: 1px solid #fff; }
.hscroll svg { margin-top: 3px; }
.hscroll .thumb { width: 21px; height: 20px; margin: -1px auto 0 336px; background: #cdcdcd; }
.left { transform: rotate(-90deg); }
.right { transform: rotate(90deg); }

.layers { border-left: 1px solid #a0a0a0; border-right: 1px solid #a0a0a0; }
.layers-head { margin: 0; height: 17px; padding-left: 2px; font: 13px/15px "Liberation Sans", Arial, sans-serif; background: linear-gradient(#bdbdbd, #d9d9d9); }
.tabs { display: flex; align-items: flex-end; height: 33px; padding: 0 0 3px 5px; border-top: 1px solid #a0a0a0; border-bottom: 1px solid #a0a0a0; background: linear-gradient(#a0a0a0, #a0a0a0) 0 28px / 100% 1px no-repeat, linear-gradient(#c3c3c3, #f0f0f0); }
.tab { height: 26px; padding: 3px 7px 0; border: 1px solid #a0a0a0; border-radius: 3px 3px 0 0; background: linear-gradient(#e8e8e8 50%, #dadada 50%); }
.tab.active { width: 71px; height: 26px; border-bottom-color: #f0f0f0; background: linear-gradient(#fff, #f0f0f0); }
.tab + .tab { width: 76px; border-left: 0; }
.layer-list { list-style: none; margin: 0; padding: 2px 0 0 15px; }
.layer-list li { position: relative; display: flex; align-items: center; height: 21px; }
.layer-list svg { width: 16px; height: 16px; margin: 0 5px 0 1px; }
.layer-list .off { color: #a3a3a3; }
.current::before { content: ""; position: absolute; left: -8px; top: 4px; border: 6px solid transparent; border-left-color: #4343ff; border-right-width: 0; }
.sw { width: 16px; height: 16px; border: 1px solid #000; }
.red { background: #840000; }
.green { background: #008400; }
.purple { background: #840084; }
.navy { background: #000084; }
.cyan { background: #00c2c2; }
.teal { background: #008484; }
.olive { background: #848400; }
.silver { background: #c2c2c2; }
.yellow { background: #c2c200; }
.magenta { background: #c200c2; }
.grey { background: #848484; }

.status { display: flex; white-space: nowrap; letter-spacing: .07px; }
.editor .status { margin-top: 40px; height: 28px; border-top: 1px solid #d7d7d7; padding-top: 2px; }
.status span { height: 25px; padding: 3px 0 0 4px; border-left: 1px solid #d7d7d7; flex: none; }
.status span:first-child { border-left: 0; }
.editor .status span:nth-child(1) { width: 9px; }
.editor .status span:nth-child(2) { width: 81px; }
.editor .status span:nth-child(3) { width: 219px; }
.editor .status span:nth-child(4) { width: 338px; }
.editor .status span:nth-child(5) { width: 250px; letter-spacing: .2px; }
.editor .status span:nth-child(6) { width: 66px; }
.status .last { flex: 1; display: flex; justify-content: flex-end; align-items: flex-end; padding: 0 2px 1px 0; }
.grip { width: 11px; height: 11px; }

.stage { height: 691px; padding: 9px 13px 0; background: #000; border: 1px solid #a0a0a0; border-top-color: #8c8c8c; }
.stage svg { display: block; width: 728px; height: 672px; }
.viewer .status { height: 27px; padding-top: 2px; letter-spacing: 0; }
.viewer .status span { padding-top: 4px; }
.viewer .status span:nth-child(1) { width: 277px; padding-left: 2px; }
.viewer .status span:nth-child(2) { width: 140px; }
.viewer .status span:nth-child(3) { width: 140px; }
.emboss { font: 30px "Open Sans", sans-serif; fill: none; stroke: #939393; stroke-width: .6; opacity: .7; }

.ic-sans { font-family: "DejaVu Sans", sans-serif; fill: #333; stroke: #333; stroke-width: .2; }
.ic-bold { font-family: "DejaVu Sans", sans-serif; font-weight: 700; fill: #333; }
.ic-serif { font-family: "Liberation Serif", serif; font-weight: 700; }
```
